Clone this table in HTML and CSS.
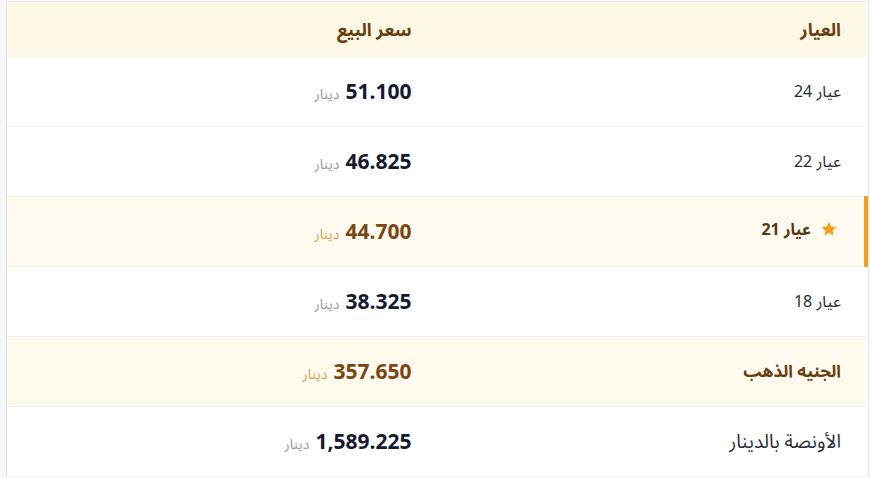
FILE: index.html
```html
<!DOCTYPE html>
<html lang="ar" dir="rtl">
<head>
<meta charset="utf-8">
<link rel="stylesheet" href="styles.css">
</head>
<body>
<div class="wrap">
<table class="prices">
  <thead>
    <tr><th>العيار</th><th>سعر البيع</th></tr>
  </thead>
  <tbody>
    <tr><td class="label">عيار 24</td><td><span class="num">51.100</span><span class="unit">دينار</span></td></tr>
    <tr><td class="label">عيار 22</td><td><span class="num">46.825</span><span class="unit">دينار</span></td></tr>
    <tr class="featured"><td class="label"><span class="star"><svg width="18" height="18" viewBox="0 0 24 24"><path d="M12 2.2l2.9 6.3 6.9.8-5.1 4.7 1.4 6.8L12 17.4l-6.1 3.4 1.4-6.8-5.1-4.7 6.9-.8z" fill="#f5a01a"/></svg></span>عيار 21</td><td><span class="num">44.700</span><span class="unit">دينار</span></td></tr>
    <tr><td class="label">عيار 18</td><td><span class="num">38.325</span><span class="unit">دينار</span></td></tr>
    <tr class="gold"><td class="label">الجنيه الذهب</td><td><span class="num">357.650</span><span class="unit">دينار</span></td></tr>
    <tr><td class="label wide">الأونصة بالدينار</td><td><span class="num">1,589.225</span><span class="unit">دينار</span></td></tr>
  </tbody>
</table>
</div>
</body>
</html>
```
FILE: styles.css
```css
html, body { margin: 0; padding: 0; }
body {
  background: #f7f8fa;
  font-family: "Noto Sans Arabic", "Noto Sans", "DejaVu Sans", sans-serif;
  width: 870px;
  height: 478px;
  overflow: hidden;
}
.wrap {
  margin-right: 1px;
  margin-left: 6px;
  margin-top: 1px;
  border-left: 1px solid #e6e8ec;
  border-right: 1px solid #e6e8ec;
  border-top: 1px solid #eceef1;
  background: #fff;
}
.prices {
  width: 100%;
  border-collapse: collapse;
  table-layout: fixed;
}
.prices th {
  background: #fef9e6;
  height: 55px;
  padding: 0 25px;
  text-align: right;
  font-size: 18px;
  font-weight: 700;
  color: #6b3d10;
}
.prices td {
  height: 69px;
  padding: 0 25px;
  text-align: right;
  border-top: 1px solid #eeeff2;
  vertical-align: middle;
}
.prices tbody tr:first-child td { border-top: none; height: 69px; }
.label {
  font-size: 16px;
  color: #2a2d34;
}
.label.wide { font-size: 19px; }
.num {
  font-size: 21px;
  font-weight: 700;
  color: #151a33;
}
.unit {
  font-size: 14px;
  color: #9a9a9a;
  margin-right: 6px;
}
.featured td { background: #fffbf0; }
.featured td:first-child { border-right: 4px solid #f3a01e; padding-right: 26px; }
.featured .label { font-weight: 700; color: #5a3410; }
.featured .num, .gold .num { color: #7a4613; }
.featured .unit, .gold .unit { color: #d6a24e; }
.gold td { background: #fffcef; }
.gold .label { font-weight: 700; color: #6b3d10; font-size: 17px; }
.star { display: inline-block; vertical-align: -3px; margin-left: 9px; }
```
